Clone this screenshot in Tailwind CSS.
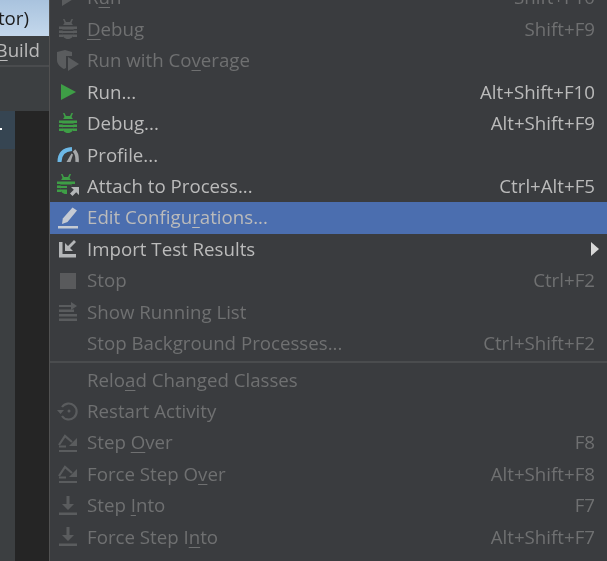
<!DOCTYPE html>
<html lang="en">

<head>
    <meta charset="UTF-8">
    <meta name="viewport" content="width=device-width, initial-scale=1.0">
    <script src="https://cdn.jsdelivr.net/npm/@tailwindcss/browser@4"></script>
    <title>Run menu</title>
</head>

<body class="h-[561px] w-[607px] overflow-hidden bg-[#3c3f41] font-['Open_Sans',sans-serif] text-[18.7px] leading-none">
    <div class="flex h-[561px] blur-[0.4px]">

        <!-- left side of the IDE behind the menu -->
        <aside class="flex h-full w-[49px] shrink-0 flex-col overflow-hidden text-[#bbbbbb]">
            <div class="flex h-[36px] shrink-0 items-center justify-end bg-gradient-to-b from-[#a9c3de] to-[#c4d8ec] pr-[20px] text-[#1c1c1c]">tor)</div>
            <div class="flex h-[31px] shrink-0 items-center justify-end border-b-2 border-[#4a4c4e] pr-[9px]"><span><u class="underline-offset-3">B</u>uild</span></div>
            <div class="h-[44px] shrink-0 bg-[#3c3f41]"></div>
            <div class="flex min-h-0 flex-1">
                <div class="flex w-[15px] flex-col">
                    <div class="h-[38px] shrink-0 bg-[#364552] pt-[17px]"><div class="h-[2px] w-[2px] bg-white"></div></div>
                    <div class="flex-1 bg-[#3c3f41]"></div>
                </div>
                <div class="w-[34px] bg-[#252525]"></div>
            </div>
        </aside>

        <!-- run menu -->
        <ul class="-mt-[18px] h-[600px] flex-1 border-l border-[#515151] bg-[#3a3c3f] text-[#bbbbbb]">
            <li class="flex h-[31.45px] items-center text-[#6f7071]">
                <span class="flex w-[37px] shrink-0 justify-center pr-[2px]">
                    <svg width="20" height="20" viewBox="0 0 20 20"><path d="M4 2l13 8-13 8z" fill="#5a5c5e"/></svg>
                </span>
                <span class="flex-1">R<u class="underline-offset-3">u</u>n</span>
                <span class="pr-[12px]">Shift+F10</span>
            </li>
            <li class="flex h-[31.45px] items-center text-[#6f7071]">
                <span class="flex w-[37px] shrink-0 justify-center pr-[2px]">
                    <svg width="20" height="20" viewBox="0 0 20 20" fill="#5a5c5e"><path d="M5 0h1.500L8 3h4l1.500-3H15l-1.500 4c.7.6 1.100 1.200 1.300 2H5.200c.2-.8.6-1.400 1.300-2zM4.500 7.500h11v7c0 3-2 5.500-5.500 5.500s-5.500-2.500-5.500-5.500zM1 7.500h3.500V10H1zM15.500 7.500H19V10h-3.500zM1 11.500h3.500V14H1zM15.500 11.500H19V14h-3.500zM1 15.500h4V18H1zM15 15.500h4V18h-4z"/><path d="M4.500 10.500h11V12h-11zM4.500 14h11v1.500h-11z" fill="#3a3c3f"/></svg>
                </span>
                <span class="flex-1"><u class="underline-offset-3">D</u>ebug</span>
                <span class="pr-[12px]">Shift+F9</span>
            </li>
            <li class="flex h-[31.45px] items-center text-[#6f7071]">
                <span class="flex w-[37px] shrink-0 justify-center pr-[2px]">
                    <svg width="24" height="22" viewBox="0 0 24 22"><path d="M1 2l8-2 7 2v4H10v12l-2 1c-4-2-7-5-7-9z" fill="#5a5c5e"/><path d="M12 7l11 7-11 7z" fill="#5a5c5e"/></svg>
                </span>
                <span class="flex-1">Run with Co<u class="underline-offset-3">v</u>erage</span>
            </li>
            <li class="flex h-[31.45px] items-center">
                <span class="flex w-[37px] shrink-0 justify-center pr-[2px]">
                    <svg width="20" height="20" viewBox="0 0 20 20"><path d="M3 2L18 10 3 18z" fill="#3e9e46"/></svg>
                </span>
                <span class="flex-1">Run...</span>
                <span class="pr-[12px]">Alt+Shift+F10</span>
            </li>
            <li class="flex h-[31.45px] items-center">
                <span class="flex w-[37px] shrink-0 justify-center pr-[2px]">
                    <svg width="20" height="20" viewBox="0 0 20 20" fill="#3e9e46"><path d="M5 0h1.500L8 3h4l1.500-3H15l-1.500 4c.7.6 1.100 1.200 1.300 2H5.200c.2-.8.6-1.400 1.300-2zM4.500 7.500h11v7c0 3-2 5.500-5.500 5.500s-5.500-2.500-5.500-5.500zM1 7.500h3.500V10H1zM15.500 7.500H19V10h-3.500zM1 11.500h3.500V14H1zM15.500 11.500H19V14h-3.500zM1 15.500h4V18H1zM15 15.500h4V18h-4z"/><path d="M4.500 10.500h11V12h-11zM4.500 14h11v1.500h-11z" fill="#3a3c3f"/></svg>
                </span>
                <span class="flex-1">Debug...</span>
                <span class="pr-[12px]">Alt+Shift+F9</span>
            </li>
            <li class="flex h-[31.45px] items-center">
                <span class="flex w-[37px] shrink-0 justify-center pr-[2px]">
                    <svg width="22" height="18" viewBox="0 0 22 18" fill="none"><path d="M2.500 16C2.500 8 7 3.500 15 3" stroke="#6cb8e6" stroke-width="4"/><path d="M17 4.500c2.500 2.500 3.500 6.500 3 11.500" stroke="#a5a7a9" stroke-width="3.500"/><path d="M9.500 16l5-8.500 1.500 1-2.500 7.500z" fill="#a5a7a9"/></svg>
                </span>
                <span class="flex-1">Profile...</span>
            </li>
            <li class="flex h-[31.45px] items-center">
                <span class="flex w-[37px] shrink-0 justify-center pr-[2px]">
                    <svg width="22" height="24" viewBox="0 0 22 24"><path d="M4 0h1.500L7 3h4l1.500-3H14l-1.500 4c.7.6 1.100 1.200 1.300 2H4.200c.2-.8.6-1.400 1.300-2zM3.500 7.500h11v7c0 3-2 5.500-5.500 5.500s-5.500-2.500-5.500-5.500zM0 7.500h3.500V10H0zM14.500 7.500H18V10h-3.500zM0 11.500h3.500V14H0zM0 15.500h4V18H0z" fill="#3e9e46"/><path d="M3.500 10.500h11V12h-11zM3.500 14h11v1.500h-11zM10 12h12v12H10z" fill="#3a3c3f"/><path d="M14 13h8v8l-2.800-2.800-3.700 3.800-2.500-2.500 3.800-3.700z" fill="#b4b6b8"/></svg>
                </span>
                <span class="flex-1">Attach to Process...</span>
                <span class="pr-[12px]">Ctrl+Alt+F5</span>
            </li>
            <li class="flex h-[31.45px] items-center bg-[#4b6eaf]">
                <span class="flex w-[37px] shrink-0 justify-center pr-[2px]">
                    <svg width="22" height="22" viewBox="0 0 22 22"><path d="M15.500 0.500l4.500 3-9.500 11.500-5.500 2 .8-5.500z" fill="#c5cad3"/><path d="M1 19h20v2.500H1z" fill="#c5cad3"/></svg>
                </span>
                <span class="flex-1">Edit Configu<u class="underline-offset-3">r</u>ations...</span>
            </li>
            <li class="flex h-[31.45px] items-center">
                <span class="flex w-[37px] shrink-0 justify-center pr-[2px]">
                    <svg width="20" height="20" viewBox="0 0 20 20" fill="#b4b6b8"><path d="M1 3h3.500v12H18v3.500H1z"/><path d="M18 3l-6 6 3 3H7V4l3 3 6-6z"/></svg>
                </span>
                <span class="flex-1">Import Test Results</span>
                <svg class="mr-[8px]" width="8" height="14" viewBox="0 0 8 14"><path d="M0 0l8 7-8 7z" fill="#d8d8d8"/></svg>
            </li>
            <li class="flex h-[31.45px] items-center text-[#6f7071]">
                <span class="flex w-[37px] shrink-0 justify-center pr-[2px]">
                    <svg width="16" height="16" viewBox="0 0 16 16"><path d="M0 0h16v16H0z" fill="#595a5c"/></svg>
                </span>
                <span class="flex-1">Stop</span>
                <span class="pr-[12px]">Ctrl+F2</span>
            </li>
            <li class="flex h-[31.45px] items-center text-[#6f7071]">
                <span class="flex w-[37px] shrink-0 justify-center pr-[2px]">
                    <svg width="20" height="20" viewBox="0 0 20 20" fill="#5a5c5e"><path d="M1 7.500h15v2.500H1zM1 12h18v2.500H1zM1 16.500h18V19H1z"/><path d="M1 3h12V0l6 4-6 4V5H1z"/></svg>
                </span>
                <span class="flex-1">Show Running List</span>
            </li>
            <li class="flex h-[31.45px] items-center text-[#6f7071]">
                <span class="w-[37px] shrink-0"></span>
                <span class="flex-1">Stop Background Processes...</span>
                <span class="pr-[12px]">Ctrl+Shift+F2</span>
            </li>
            <li class="mt-[1.500px] h-[3.500px] border-t-2 border-[#4a4c4e]"></li>
            <li class="flex h-[31.45px] items-center text-[#6f7071]">
                <span class="w-[37px] shrink-0"></span>
                <span class="flex-1">Relo<u class="underline-offset-3">a</u>d Changed Classes</span>
            </li>
            <li class="flex h-[31.45px] items-center text-[#6f7071]">
                <span class="flex w-[37px] shrink-0 justify-center pr-[2px]">
                    <svg width="22" height="20" viewBox="0 0 22 20" fill="none" stroke="#5a5c5e" stroke-width="2.200"><path d="M5 6a8 8 0 1 1 0 9"/><path d="M0 9h7l-3.500 4z" fill="#5a5c5e" stroke="none"/><circle cx="12" cy="10" r="1.500" fill="#5a5c5e" stroke="none"/></svg>
                </span>
                <span class="flex-1">Restart Activity</span>
            </li>
            <li class="flex h-[31.45px] items-center text-[#6f7071]">
                <span class="flex w-[37px] shrink-0 justify-center pr-[2px]">
                    <svg width="20" height="20" viewBox="0 0 20 20" fill="none" stroke="#5a5c5e" stroke-width="2.200"><path d="M1 12L7 3l7 6"/><path d="M19 5v8h-8z" fill="#5a5c5e" stroke="none"/><path d="M1 13.500h7M1 18h18"/></svg>
                </span>
                <span class="flex-1">Step <u class="underline-offset-3">O</u>ver</span>
                <span class="pr-[12px]">F8</span>
            </li>
            <li class="flex h-[31.45px] items-center text-[#6f7071]">
                <span class="flex w-[37px] shrink-0 justify-center pr-[2px]">
                    <svg width="20" height="20" viewBox="0 0 20 20" fill="none" stroke="#5a5c5e" stroke-width="2.200"><path d="M1 12L7 3l7 6"/><path d="M19 5v8h-8z" fill="#5a5c5e" stroke="none"/><path d="M1 13.500h7M1 18h18"/></svg>
                </span>
                <span class="flex-1">Force Step O<u class="underline-offset-3">v</u>er</span>
                <span class="pr-[12px]">Alt+Shift+F8</span>
            </li>
            <li class="flex h-[31.45px] items-center text-[#6f7071]">
                <span class="flex w-[37px] shrink-0 justify-center pr-[2px]">
                    <svg width="20" height="20" viewBox="0 0 20 20" fill="#5a5c5e"><path d="M8.500 0h3v8H16l-6 6-6-6h4.500zM1 16.500h18V19H1z"/></svg>
                </span>
                <span class="flex-1">Step <u class="underline-offset-3">I</u>nto</span>
                <span class="pr-[12px]">F7</span>
            </li>
            <li class="flex h-[31.45px] items-center text-[#6f7071]">
                <span class="flex w-[37px] shrink-0 justify-center pr-[2px]">
                    <svg width="20" height="20" viewBox="0 0 20 20" fill="#5a5c5e"><path d="M8.500 0h3v8H16l-6 6-6-6h4.500zM1 16.500h18V19H1z"/></svg>
                </span>
                <span class="flex-1">Force Step I<u class="underline-offset-3">n</u>to</span>
                <span class="pr-[12px]">Alt+Shift+F7</span>
            </li>
        </ul>
    </div>
</body>

</html>
